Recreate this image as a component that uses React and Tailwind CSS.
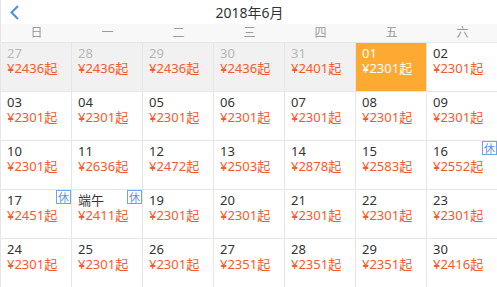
import React from "react";

const weekdays = ["日", "一", "二", "三", "四", "五", "六"];

// [label, price, flags]
const days = [
  ["27", "2436", "prev"], ["28", "2436", "prev"], ["29", "2436", "prev"], ["30", "2436", "prev"], ["31", "2401", "prev"], ["01", "2301", "active"], ["02", "2301"],
  ["03", "2301"], ["04", "2301"], ["05", "2301"], ["06", "2301"], ["07", "2301"], ["08", "2301"], ["09", "2301"],
  ["10", "2301"], ["11", "2636"], ["12", "2472"], ["13", "2503"], ["14", "2878"], ["15", "2583"], ["16", "2552", "rest"],
  ["17", "2451", "rest"], ["端午", "2411", "rest"], ["19", "2301"], ["20", "2301"], ["21", "2301"], ["22", "2301"], ["23", "2301"],
  ["24", "2301"], ["25", "2301"], ["26", "2301"], ["27", "2351"], ["28", "2351"], ["29", "2351"], ["30", "2416"],
];

function DayCell({ label, price, flag }) {
  const prev = flag === "prev";
  const active = flag === "active";
  return (
    <div
      className={`relative h-[49px] border-r border-b border-[#e6e6e6] pl-[6px] pt-[3px] text-[13px] leading-[15px] ${
        active ? "bg-[#fea932]" : prev ? "bg-[#f1f1f1]" : "bg-white"
      }`}
    >
      <div className={active ? "text-white" : prev ? "text-[#b8b8b8]" : "text-[#333]"}>{label}</div>
      <div className={active ? "text-white" : "text-[#f8592a]"}>¥{price}起</div>
      {flag === "rest" && (
        <span className="absolute right-0 top-0 flex h-[14px] w-[15px] items-center justify-center border border-[#6da4ec] text-[11px] leading-none text-[#5b95e6]">
          休
        </span>
      )}
    </div>
  );
}

export default function App() {
  return (
    <div className="w-[497px] h-[287px] overflow-hidden bg-white">
      <div
        className="w-[498px] border-l border-[#e6e6e6]"
        style={{ fontFamily: '"Noto Sans", "Noto Sans CJK SC", sans-serif' }}
      >
        {/* header */}
        <div className="relative flex h-[24px] items-center justify-center">
          <svg className="absolute left-[8px] top-[5px]" width="12" height="15" viewBox="0 0 12 15">
            <polyline points="9,1 2.5,7.5 9,14" fill="none" stroke="#4a8fe7" strokeWidth="2" />
          </svg>
          <span className="text-[14px] text-[#333]">2018年6月</span>
        </div>

        {/* weekdays */}
        <div className="grid h-[19px] grid-cols-[repeat(7,71px)] border-b border-[#e6e6e6] bg-[#f8f8f8]">
          {weekdays.map((w) => (
            <div key={w} className="flex items-center justify-center text-[12px] text-[#9a9a9a]">
              {w}
            </div>
          ))}
        </div>

        {/* days */}
        <div className="grid grid-cols-[repeat(7,71px)]">
          {days.map(([label, price, flag], i) => (
            <DayCell key={i} label={label} price={price} flag={flag} />
          ))}
        </div>
      </div>
    </div>
  );
}
